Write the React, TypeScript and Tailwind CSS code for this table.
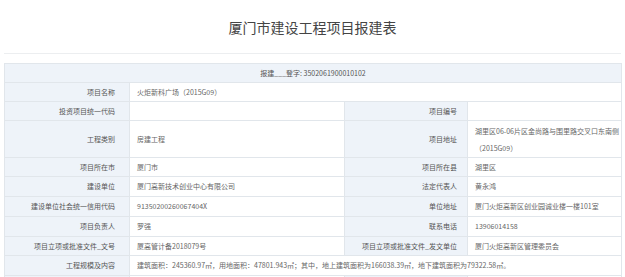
const font = '"Noto Sans CJK SC", "Microsoft YaHei", sans-serif';

type Cell = { text?: string; label?: boolean; span?: number; pr?: string };

const labelL = 'bg-[#eef3f9] text-right text-[#555] pr-[14px]';
const labelR = 'bg-[#eef3f9] text-right text-[#555] pr-[10px]';
const value = 'bg-white text-left text-[#666] pl-[7px]';

function Row({ h, cells }: { h: string; cells: Cell[] }) {
  return (
    <tr className={h}>
      {cells.map((c, i) => (
        <td
          key={i}
          colSpan={c.span}
          className={`border border-[#e1e6eb] align-middle whitespace-nowrap ${
            c.label ? (i === 0 ? labelL : labelR) : value
          }`}
        >
          {c.text}
        </td>
      ))}
    </tr>
  );
}

export default function App() {
  return (
    <div className="w-[625px] h-[277px] overflow-hidden bg-white" style={{ fontFamily: font }}>
      <div className="mx-[4px] h-[54px] border-b border-[#eceef0] flex items-center justify-center">
        <h1 className="text-[14px] leading-none text-[#444] pt-[1px]">厦门市建设工程项目报建表</h1>
      </div>
      <table className="mt-[9px] ml-[4px] w-[617px] table-fixed border-collapse text-[7px] leading-[17px]">
        <colgroup>
          <col className="w-[125px]" />
          <col className="w-[215px]" />
          <col className="w-[123px]" />
          <col className="w-[154px]" />
        </colgroup>
        <tbody>
          <tr className="h-[19px]">
            <td colSpan={4} className="border border-[#e1e6eb] bg-[#eef3f9] text-center text-[#555]">
              报建___登字: 3502061900010102
            </td>
          </tr>
          <Row h="h-[19px]" cells={[{ text: '项目名称', label: true }, { text: '火炬新科广场（2015G09）', span: 3 }]} />
          <Row
            h="h-[19px]"
            cells={[{ text: '投资项目统一代码', label: true }, { text: '' }, { text: '项目编号', label: true }, { text: '' }]}
          />
          <tr className="h-[37px]">
            <td className={`border border-[#e1e6eb] ${labelL}`}>工程类别</td>
            <td className={`border border-[#e1e6eb] ${value}`}>房建工程</td>
            <td className={`border border-[#e1e6eb] ${labelR}`}>项目地址</td>
            <td className={`border border-[#e1e6eb] ${value} pt-[1px]`}>
              湖里区06-06片区金尚路与围里路交叉口东南侧
              <br />
              （2015G09）
            </td>
          </tr>
          <Row
            h="h-[19px]"
            cells={[{ text: '项目所在市', label: true }, { text: '厦门市' }, { text: '项目所在县', label: true }, { text: '湖里区' }]}
          />
          <Row
            h="h-[20px]"
            cells={[
              { text: '建设单位', label: true },
              { text: '厦门高新技术创业中心有限公司' },
              { text: '法定代表人', label: true },
              { text: '黄永鸿' },
            ]}
          />
          <Row
            h="h-[20px]"
            cells={[
              { text: '建设单位社会统一信用代码', label: true },
              { text: '91350200260067404X' },
              { text: '单位地址', label: true },
              { text: '厦门火炬高新区创业园诚业楼一楼101室' },
            ]}
          />
          <Row
            h="h-[20px]"
            cells={[
              { text: '项目负责人', label: true },
              { text: '罗强' },
              { text: '联系电话', label: true },
              { text: '13906014158' },
            ]}
          />
          <Row
            h="h-[19px]"
            cells={[
              { text: '项目立项或批准文件_文号', label: true },
              { text: '厦高管计备2018079号' },
              { text: '项目立项或批准文件_发文单位', label: true },
              { text: '厦门火炬高新区管理委员会' },
            ]}
          />
          <Row
            h="h-[20px]"
            cells={[
              { text: '工程规模及内容', label: true },
              {
                text: '建筑面积：245360.97㎡，用地面积：47801.943㎡；其中，地上建筑面积为166038.39㎡，地下建筑面积为79322.58㎡。',
                span: 3,
              },
            ]}
          />
          <Row h="h-[20px]" cells={[{ label: true }, {}, { label: true }, {}]} />
        </tbody>
      </table>
    </div>
  );
}
